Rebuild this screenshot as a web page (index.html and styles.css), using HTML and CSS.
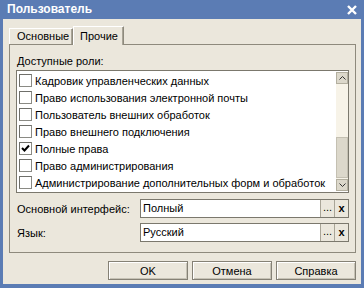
FILE: index.html
```html
<!DOCTYPE html>
<html lang="ru">
  <head>
    <meta charset="UTF-8" />
    <title>Пользователь</title>
    <link rel="stylesheet" href="styles.css">
  </head>
  <body>
    <div class="window">
      <header class="titlebar">
        <span class="title">Пользователь</span>
        <svg class="close" width="10" height="10" viewBox="0 0 10 10">
          <path d="M1 1 L9 9 M9 1 L1 9" stroke="#fff" stroke-width="2.4" />
        </svg>
      </header>

      <section class="content">
        <nav class="tabs">
          <div class="tab">Основные</div>
          <div class="tab active">Прочие</div>
        </nav>

        <section class="panel">
          <p class="caption">Доступные роли:</p>

          <div class="list">
            <div class="items">
              <div class="item"><span class="check"></span>Кадровик управленческих данных</div>
              <div class="item"><span class="check"></span>Право использования электронной почты</div>
              <div class="item"><span class="check"></span>Пользователь внешних обработок</div>
              <div class="item"><span class="check"></span>Право внешнего подключения</div>
              <div class="item">
                <span class="check">
                  <svg width="9" height="9" viewBox="0 0 9 9"><path d="M1 4 L3.5 6.5 L8 1.5" stroke="#000" stroke-width="2" fill="none" /></svg>
                </span>Полные права
              </div>
              <div class="item"><span class="check"></span>Право администрирования</div>
              <div class="item"><span class="check"></span>Администрирование дополнительных форм и обработок</div>
            </div>
            <div class="scrollbar">
              <div class="sb-btn">
                <svg width="7" height="4" viewBox="0 0 7 4"><path d="M0.5 3.5 L3.5 0.5 L6.5 3.5" stroke="#333" fill="none" /></svg>
              </div>
              <div class="track"><div class="thumb"></div></div>
              <div class="sb-btn">
                <svg width="7" height="4" viewBox="0 0 7 4"><path d="M0.5 0.5 L3.5 3.5 L6.5 0.5" stroke="#333" fill="none" /></svg>
              </div>
            </div>
          </div>

          <div class="field">
            <label>Основной интерфейс:</label>
            <div class="combo">
              <span class="value">Полный</span>
              <span class="cbtn">...</span>
              <span class="cbtn clear">x</span>
            </div>
          </div>
          <div class="field">
            <label>Язык:</label>
            <div class="combo">
              <span class="value">Русский</span>
              <span class="cbtn">...</span>
              <span class="cbtn clear">x</span>
            </div>
          </div>
        </section>

        <footer class="buttons">
          <button>OK</button>
          <button>Отмена</button>
          <button>Справка</button>
        </footer>
      </section>
    </div>
  </body>
</html>
```

FILE: styles.css
```css
* {
  margin: 0;
  padding: 0;
  box-sizing: border-box;
  --blue: #5b7cb4;
  --beige: #ebe7dc;
  --line: #8e8a7d;
  --dark: #7b786d;
}

body {
  font-family: "Liberation Sans", Arial, sans-serif;
  font-size: 11px;
  color: #000;
}

.window {
  width: 364px;
  height: 288px;
  background-color: var(--blue);
  padding: 0 3px 4px 3px;
  display: flex;
  flex-direction: column;
}

.titlebar {
  height: 20px;
  display: flex;
  align-items: center;
  justify-content: space-between;
  padding: 0 4px 1px 4px;
}

.title {
  color: white;
  font-weight: bold;
  font-size: 12px;
}

.close {
  margin-top: 1px;
}

.content {
  flex: 1;
  background-color: var(--beige);
  padding: 7px 5px 4px 6px;
  display: flex;
  flex-direction: column;
}

.tabs {
  display: flex;
  align-items: flex-end;
  height: 18px;
}

.tab {
  height: 16px;
  line-height: 15px;
  padding-left: 7px;
  border: 1px solid var(--line);
  border-bottom: none;
  border-left-color: #fff;
  border-top-color: #fff;
  box-shadow: inset -1px 0 #a9a598;
  width: 64px;
  white-space: nowrap;
}

.tab.active {
  height: 19px;
  line-height: 18px;
  width: 51px;
  margin-bottom: -1px;
  background-color: var(--beige);
  position: relative;
  padding-left: 6px;
}

.panel {
  border: 1px solid var(--line);
  padding: 9px 6px 10px 6px;
  height: 209px;
}

.caption {
  line-height: 14px;
  margin-bottom: 2px;
  padding-left: 1px;
}

.list {
  display: flex;
  height: 123px;
  border: 1px solid var(--dark);
  background-color: white;
}

.items {
  flex: 1;
  padding-top: 1px;
  overflow: hidden;
}

.item {
  height: 17px;
  display: flex;
  align-items: center;
  gap: 3px;
  padding-left: 2px;
  white-space: nowrap;
}

.check {
  width: 13px;
  height: 13px;
  flex: none;
  border: 1px solid #8a8a84;
  border-top-color: #6f6f6a;
  border-left-color: #6f6f6a;
  background-color: white;
  display: flex;
  align-items: center;
  justify-content: center;
}

.scrollbar {
  width: 12px;
  margin: 1px 0;
  display: flex;
  flex-direction: column;
  background-color: #f7f3e8;
}

.sb-btn {
  height: 12px;
  background-color: #dcd8cb;
  border: 1px solid #b3af9f;
  display: flex;
  align-items: center;
  justify-content: center;
}

.track {
  flex: 1;
  display: flex;
  flex-direction: column;
  justify-content: flex-end;
  padding-bottom: 1px;
}

.thumb {
  height: 41px;
  background-color: #dcd8cb;
  border: 1px solid #c4c0b2;
}

.field {
  display: flex;
  align-items: center;
  height: 19px;
  margin-top: 6px;
}

.field + .field {
  margin-top: 5px;
}

.field label {
  width: 124px;
  padding-left: 1px;
}

.combo {
  flex: 1;
  display: flex;
  height: 19px;
  border: 1px solid var(--dark);
}

.value {
  flex: 1;
  background-color: white;
  padding-left: 2px;
  line-height: 17px;
}

.cbtn {
  width: 14px;
  border-left: 1px solid #a9a597;
  background-color: var(--beige);
  text-align: center;
  line-height: 15px;
}

.clear {
  font-weight: bold;
  font-size: 11px;
  line-height: 16px;
}

.buttons {
  display: flex;
  justify-content: flex-end;
  gap: 4px;
  margin-top: 8px;
}

.buttons button {
  width: 80px;
  height: 19px;
  font-family: "Liberation Sans", Arial, sans-serif;
  font-size: 11px;
  background-color: var(--beige);
  border: 1px solid #858175;
  box-shadow: inset 1px 1px #fff, inset -1px -1px #c6c2b5;
}
```
